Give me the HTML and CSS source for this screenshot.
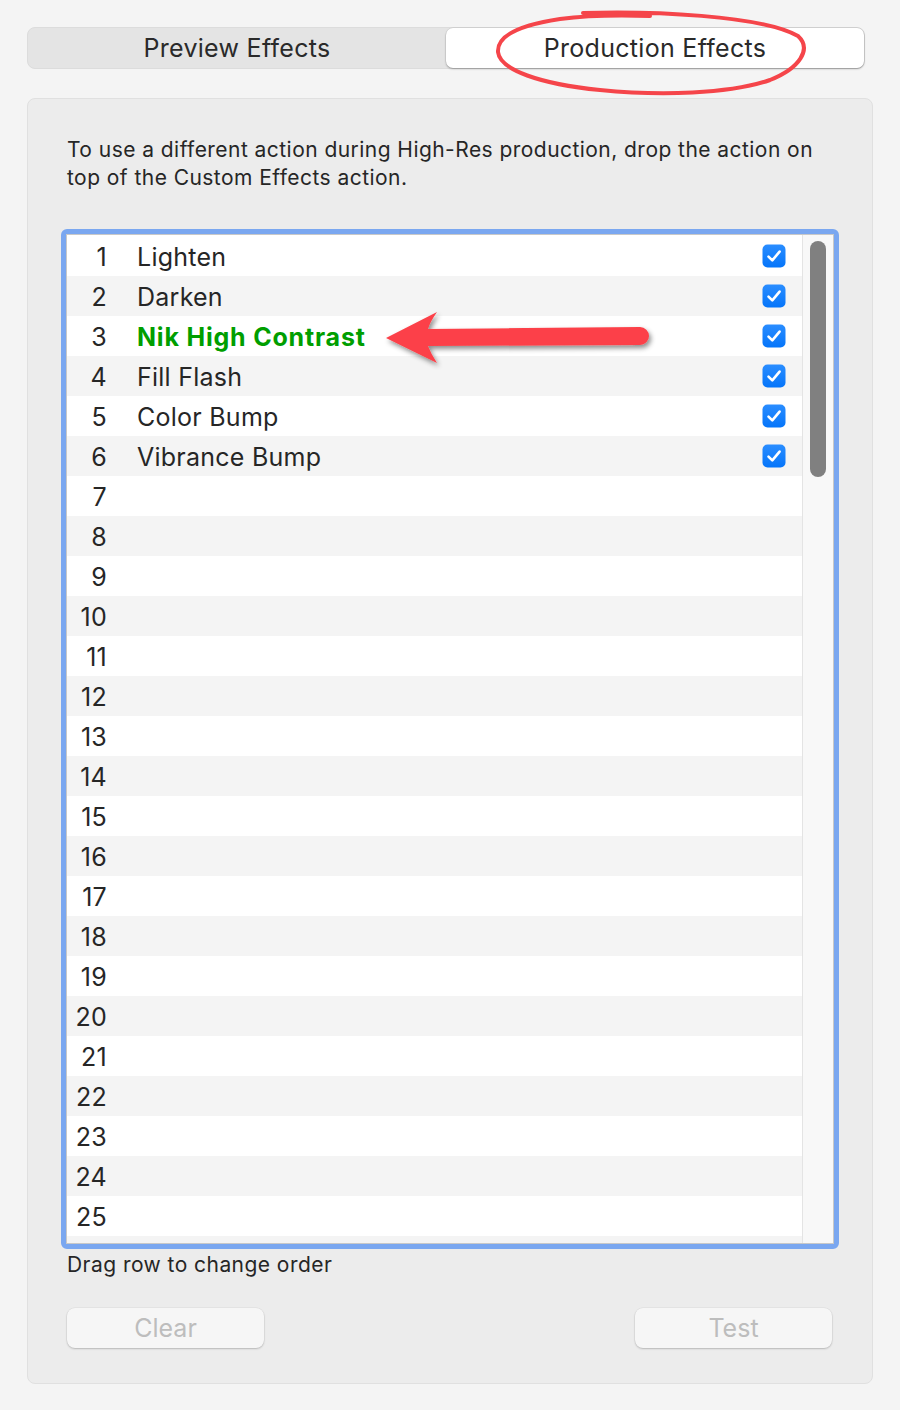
FILE: index.html
```html
<!DOCTYPE html>
<html lang="en">

<head>
    <meta charset="UTF-8">
    <meta name="viewport" content="width=device-width, initial-scale=1.0">
    <title>Production Effects</title>
    <link rel="stylesheet" href="styles.css">
</head>

<body>
    <div class="window">
        <div class="tabs">
            <div class="tab">Preview Effects</div>
            <div class="tab tab-active">Production Effects</div>
        </div>

        <div class="panel">
            <p class="hint">To use a different action during High-Res production, drop the action on top of the Custom Effects action.</p>

            <div class="list-frame">
                <div class="list">
                    <ul id="effectRows" class="rows">
                    </ul>
                    <div class="scroll-track">
                        <div class="scroll-thumb"></div>
                    </div>
                </div>
            </div>

            <p class="footnote">Drag row to change order</p>

            <div class="actions">
                <button class="action-btn" disabled>Clear</button>
                <button class="action-btn" disabled>Test</button>
            </div>
        </div>

        <!-- markup drawn over the screenshot -->
        <svg class="annotation" width="900" height="400" viewBox="0 0 900 400">
            <defs>
                <filter id="arrowShadow" x="-10%" y="-40%" width="130%" height="200%">
                    <feDropShadow dx="2" dy="3" stdDeviation="2.5" flood-color="#000" flood-opacity="0.45" />
                </filter>
            </defs>
            <path class="ring"
                d="M583 13 C650 11 760 15 798 36 C812 49 800 68 770 80 C730 94 660 96 600 90 C540 84 500 70 498 52 C497 36 520 25 560 19 C590 15 620 15 650 16" />
            <path class="arrow" filter="url(#arrowShadow)"
                d="M386 338 L437 312 Q430 322 428 329 L640 327 A9 9 0 0 1 640 345 L428 346 Q431 354 437 363 Z" />
        </svg>
    </div>

    <script>
        const effectRows = document.getElementById('effectRows');

        const effects = [
            { name: 'Lighten' },
            { name: 'Darken' },
            { name: 'Nik High Contrast', custom: true },
            { name: 'Fill Flash' },
            { name: 'Color Bump' },
            { name: 'Vibrance Bump' }
        ];

        const checkbox = `
            <svg class="check" width="24" height="24" viewBox="0 0 24 24">
                <defs>
                    <linearGradient id="checkFill" x1="0" y1="0" x2="0" y2="1">
                        <stop offset="0" stop-color="#2a8dff" />
                        <stop offset="1" stop-color="#0575fa" />
                    </linearGradient>
                </defs>
                <rect x="0.5" y="0.5" width="23" height="23" rx="5" fill="url(#checkFill)" />
                <path d="M6.5 12.6 L10.3 16.4 L17.6 7.6" fill="none" stroke="#fff" stroke-width="2.6"
                    stroke-linecap="round" stroke-linejoin="round" />
            </svg>`;

        function renderRows() {
            for (let i = 1; i <= 25; i++) {
                const effect = effects[i - 1];
                const row = document.createElement('li');
                row.className = 'row';
                row.innerHTML = `
                    <span class="row-num">${i}</span>
                    <span class="row-name${effect && effect.custom ? ' row-custom' : ''}">${effect ? effect.name : ''}</span>
                    ${effect ? checkbox : ''}
                `;
                effectRows.appendChild(row);
            }
            // next stripe peeks out under the last visible row
            const filler = document.createElement('li');
            filler.className = 'row';
            effectRows.appendChild(filler);
        }

        renderRows();
    </script>
</body>

</html>
```

FILE: styles.css
```css
body {
    margin: 0;
    padding: 0;
    background-color: #f4f4f4;
    font-family: "Inter", "Liberation Sans", sans-serif;
    color: #262626;
}

.window {
    position: relative;
    padding: 27px 27px 0 27px;
    width: 846px;
}

/* segmented control */
.tabs {
    display: flex;
    width: 836px;
    height: 40px;
    background: #e4e4e4;
    border: 1px solid #dcdcdc;
    border-radius: 8px;
    margin-bottom: 29px;
}

.tab {
    flex: 1;
    display: flex;
    align-items: center;
    justify-content: center;
    font-size: 25px;
    letter-spacing: 0.3px;
    color: #2a2a2a;
}

.tab-active {
    background: #fff;
    border-radius: 7px;
    box-shadow: 0 1px 2px rgba(0, 0, 0, 0.3), 0 0 0 0.5px rgba(0, 0, 0, 0.08);
}

/* main panel */
.panel {
    background: #ececec;
    border: 1px solid #e0e0e0;
    border-radius: 8px;
    padding: 37px 33px 35px 33px;
}

.hint {
    margin: 0 0 37px 6px;
    font-size: 21px;
    line-height: 28px;
    letter-spacing: 0.45px;
    color: #262626;
}

.list-frame {
    border: 5px solid #7aa7f0;
    border-radius: 6px;
    height: 1010px;
}

.list {
    display: flex;
    height: 100%;
    box-sizing: border-box;
    border: 1px solid #c8c8c8;
    background: #fff;
    overflow: hidden;
}

.rows {
    flex: 1;
    list-style-type: none;
    margin: 0;
    padding: 1px 0 0 0;
    border-right: 1px solid #e4e4e4;
}

.row {
    display: flex;
    align-items: center;
    height: 40px;
    padding-right: 16px;
    font-size: 25px;
    letter-spacing: 0.25px;
}

.row:nth-child(even) {
    background: #f4f4f4;
}

.row-num {
    width: 40px;
    text-align: right;
    flex-shrink: 0;
    padding-top: 2px;
}

.row-name {
    flex: 1;
    margin-left: 30px;
    padding-top: 2px;
}

.row-custom {
    color: #009e00;
    font-weight: bold;
    letter-spacing: 0.8px;
}

.check {
    display: block;
}

.scroll-track {
    width: 30px;
    background: #f8f8f8;
    padding-top: 6px;
    box-sizing: border-box;
}

.scroll-thumb {
    width: 16px;
    height: 236px;
    margin-left: 7px;
    background: #808080;
    border-radius: 8px;
}

.footnote {
    margin: 2px 0 0 6px;
    font-size: 21px;
    line-height: 28px;
    letter-spacing: 0.45px;
}

.actions {
    display: flex;
    justify-content: space-between;
    margin-top: 29px;
    padding: 0 7px 0 6px;
}

.action-btn {
    width: 197px;
    height: 40px;
    border: none;
    border-radius: 8px;
    background: #f6f6f6;
    box-shadow: 0 1px 2px rgba(0, 0, 0, 0.2), 0 0 0 0.5px rgba(0, 0, 0, 0.06);
    font-family: inherit;
    font-size: 25px;
    color: #bdbdbd;
}

/* red markup over the window */
.annotation {
    position: absolute;
    top: 0;
    left: 0;
    pointer-events: none;
}

.ring {
    fill: none;
    stroke: #f5454a;
    stroke-width: 4;
    stroke-linecap: round;
}

.arrow {
    fill: #fc4148;
}
```
